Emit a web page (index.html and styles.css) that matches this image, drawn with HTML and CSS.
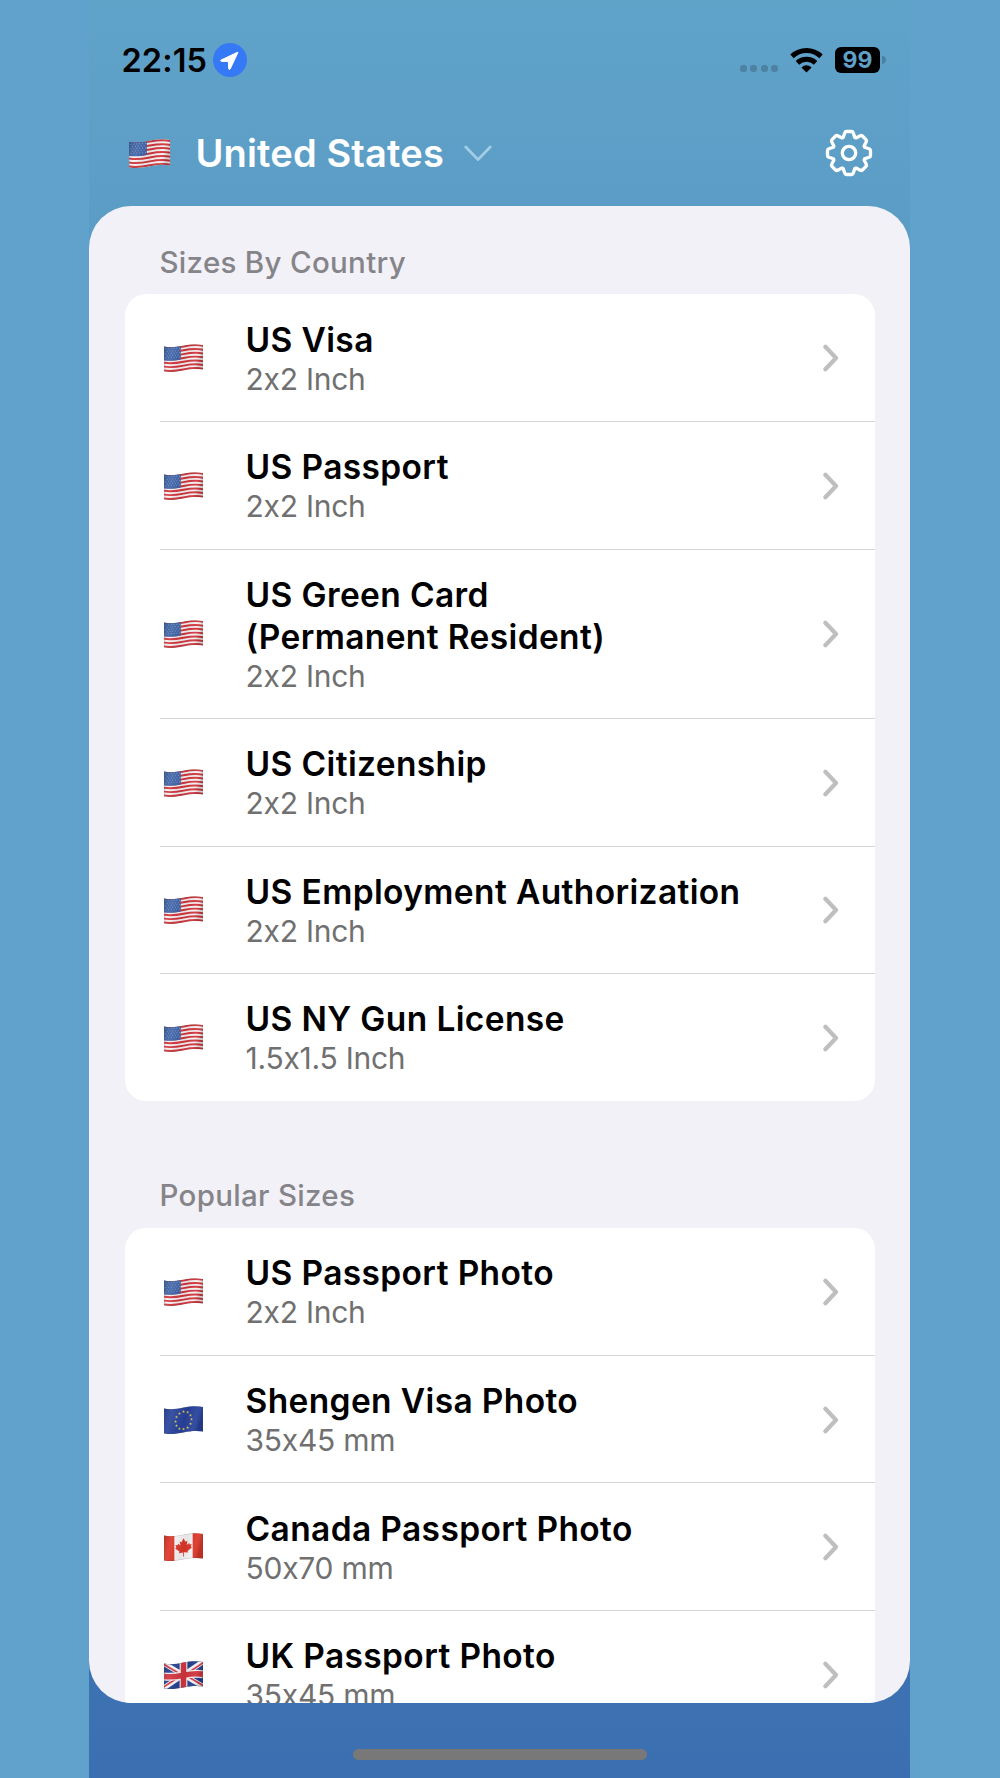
FILE: index.html
```html
<!DOCTYPE html>
<html lang="en">
  <head>
    <meta charset="utf-8" />
    <title>Photo Sizes</title>
    <link rel="stylesheet" href="styles.css">
  </head>
  <body>
    <!-- shared icons -->
    <svg class="sprite" width="0" height="0">
      <defs>
        <clipPath id="wave">
          <path d="M0 2.6C7 3.8 13 3 20 1.6S34 -0.3 40 1V25.6C34 24.4 27 25 20 26.4S7 28.4 0 27.4Z" />
        </clipPath>
        <linearGradient id="fold" x1="0" x2="1" y1="0" y2="0.2">
          <stop offset="0" stop-color="#000" stop-opacity="0.16" />
          <stop offset="0.25" stop-color="#fff" stop-opacity="0.08" />
          <stop offset="0.6" stop-color="#000" stop-opacity="0.06" />
          <stop offset="0.85" stop-color="#fff" stop-opacity="0.06" />
          <stop offset="1" stop-color="#000" stop-opacity="0.14" />
        </linearGradient>
        <path id="shade" d="M0 2.6C7 3.8 13 3 20 1.6S34 -0.3 40 1V25.6C34 24.4 27 25 20 26.4S7 28.4 0 27.4Z" fill="url(#fold)" stroke="#555" stroke-opacity="0.35" stroke-width="0.8" />
        <path id="stripe" d="M0 3.5C7 4.7 13 3.9 20 2.5S34 0.6 40 1.9" fill="none" stroke="#d2343c" stroke-width="1.95" />
        <path id="star" d="M0 -1.5L0.45 -0.45L1.5 -0.4L0.65 0.3L0.95 1.4L0 0.8L-0.95 1.4L-0.65 0.3L-1.5 -0.4L-0.45 -0.45Z" fill="#d9c35c" />
      </defs>

      <symbol id="flag-us" viewBox="0 0 40 28" preserveAspectRatio="none">
        <g clip-path="url(#wave)">
          <rect width="40" height="28" fill="#f6f1f1" />
          <use href="#stripe" />
          <use href="#stripe" y="3.82" />
          <use href="#stripe" y="7.64" />
          <use href="#stripe" y="11.46" />
          <use href="#stripe" y="15.28" />
          <use href="#stripe" y="19.1" />
          <use href="#stripe" y="22.92" />
          <path d="M0 0H17.2V15.4C12 16.6 6 17 0 16.4Z" fill="#3d62a6" />
          <g stroke="#c5d2ea" stroke-width="0.8" stroke-dasharray="0.9 1.9" opacity="0.6">
            <path d="M1.5 5.2L17 4.2" />
            <path d="M2.9 7.4L17 6.4" />
            <path d="M1.5 9.6L17 8.6" />
            <path d="M2.9 11.8L17 10.8" />
            <path d="M1.5 14L17 13" />
          </g>
          <use href="#shade" />
        </g>
      </symbol>

      <symbol id="flag-eu" viewBox="0 0 40 28" preserveAspectRatio="none">
        <g clip-path="url(#wave)">
          <rect width="40" height="28" fill="#27429b" />
          <use href="#star" x="20" y="5.5" />
          <use href="#star" x="24.2" y="6.2" />
          <use href="#star" x="27.2" y="9.2" />
          <use href="#star" x="28.2" y="13.2" />
          <use href="#star" x="27.2" y="17.8" />
          <use href="#star" x="24.2" y="21.5" />
          <use href="#star" x="20" y="23" />
          <use href="#star" x="15.8" y="22.6" />
          <use href="#star" x="12.8" y="19.6" />
          <use href="#star" x="11.8" y="15.4" />
          <use href="#star" x="12.8" y="11" />
          <use href="#star" x="15.8" y="7.4" />
          <use href="#shade" />
        </g>
      </symbol>

      <symbol id="flag-ca" viewBox="0 0 40 28" preserveAspectRatio="none">
        <g clip-path="url(#wave)">
          <rect width="40" height="28" fill="#f5f3f3" />
          <rect width="10.6" height="28" fill="#dc3628" />
          <rect x="29.4" width="10.6" height="28" fill="#dc3628" />
          <path d="M20 5.2L22 8.8L24 7.8L23.3 12L25.8 10L26.4 11.4L28.4 11L27.6 13.6L28.6 14.4L24.2 18L24.6 19.6L20.4 19.2V23.6H19.6V19.4L15.4 20.2L15.9 18.6L11.4 15.4L12.5 14.4L11.8 12L13.9 12.2L14.5 10.8L16.9 12.6L16.1 8.4L18 9.2Z" fill="#dc3628" />
          <use href="#shade" />
        </g>
      </symbol>

      <symbol id="flag-gb" viewBox="0 0 40 28" preserveAspectRatio="none">
        <g clip-path="url(#wave)">
          <rect width="40" height="28" fill="#223f8f" />
          <path d="M-1 2L41 26M-1 27.5L41 0" stroke="#f4f1f4" stroke-width="5" />
          <path d="M-1 3L20 15M20 13L41 25M-1 26.5L20 13M20 15L41 1" stroke="#d2343c" stroke-width="1.7" />
          <path d="M20 0V28M0 15.4C7 16.4 13 15.6 20 14.2S34 12.2 40 13.2" fill="none" stroke="#f4f1f4" stroke-width="8" />
          <path d="M20 0V28M0 15.4C7 16.4 13 15.6 20 14.2S34 12.2 40 13.2" fill="none" stroke="#d2343c" stroke-width="5.6" />
          <use href="#shade" />
        </g>
      </symbol>

      <symbol id="chevron" viewBox="0 0 16 28">
        <path d="M2.4 2.8L13 14L2.4 25.2" fill="none" stroke="#bfbfc0" stroke-width="4.2" stroke-linecap="round" stroke-linejoin="round" />
      </symbol>
    </svg>

    <div class="phone">
      <div class="status-bar">
        <span class="time">22:15</span>
        <svg class="location" viewBox="0 0 34 34">
          <circle cx="17" cy="17" r="17" fill="#3579f7" />
          <path d="M24.6 9.2L8 17.1Q7 17.9 8.2 18.3L15.4 18.6L15.7 25.8Q16.2 27.3 17.2 25.9L24.9 9.6Z" fill="#fff" stroke="#fff" stroke-width="1" stroke-linejoin="round" />
        </svg>
        <div class="dots"><i></i><i></i><i></i><i></i></div>
        <svg class="wifi" viewBox="0 0 33 25">
          <path d="M2 8.4A21 21 0 0 1 31 8.4M7.4 14.8A13.5 13.5 0 0 1 25.6 14.8" fill="none" stroke="#000" stroke-width="5" />
          <path d="M11.4 19.4Q16.5 15 21.6 19.4L16.5 24.6Z" />
        </svg>
        <div class="battery">99</div>
        <svg class="battery-tip" viewBox="0 0 4 10"><path d="M0 0.6Q4 2 4 5T0 9.4Z" fill="#4c7fa0" /></svg>
      </div>

      <div class="header">
        <svg class="header-flag"><use href="#flag-us" /></svg>
        <h1 class="country">United States</h1>
        <svg class="dropdown" viewBox="0 0 28 17">
          <path d="M1.8 2L14 14.6L26.2 2" fill="none" stroke="#a3cde5" stroke-width="2.8" stroke-linecap="round" stroke-linejoin="round" />
        </svg>
        <svg class="settings" viewBox="-24 -24 48 48">
          <path d="M-5.8 -15.6L-4.2 -20.2Q-3.8 -21.5 -2.6 -21.5H2.6Q3.8 -21.5 4.2 -20.2L5.8 -15.6L6.9 -15.1L11.3 -17.3Q12.5 -17.9 13.4 -17L17 -13.4Q17.9 -12.5 17.3 -11.3L15.1 -6.9L15.6 -5.8L20.2 -4.2Q21.5 -3.8 21.5 -2.6V2.6Q21.5 3.8 20.2 4.2L15.6 5.8L15.1 6.9L17.3 11.3Q17.9 12.5 17 13.4L13.4 17Q12.5 17.9 11.3 17.3L6.9 15.1L5.8 15.6L4.2 20.2Q3.8 21.5 2.6 21.5H-2.6Q-3.8 21.5 -4.2 20.2L-5.8 15.6L-6.9 15.1L-11.3 17.3Q-12.5 17.9 -13.4 17L-17 13.4Q-17.9 12.5 -17.3 11.3L-15.1 6.9L-15.6 5.8L-20.2 4.2Q-21.5 3.8 -21.5 2.6V-2.6Q-21.5 -3.8 -20.2 -4.2L-15.6 -5.8L-15.1 -6.9L-17.3 -11.3Q-17.9 -12.5 -17 -13.4L-13.4 -17Q-12.5 -17.9 -11.3 -17.3L-6.9 -15.1Z" />
          <circle r="6.7" />
        </svg>
      </div>

      <div class="sheet">
        <h2 class="section-title">Sizes By Country</h2>
        <ul class="card">
          <li class="row">
            <svg class="flag"><use href="#flag-us" /></svg>
            <div class="info">
              <div class="name">US Visa</div>
              <div class="size">2x2 Inch</div>
            </div>
            <svg class="chevron"><use href="#chevron" /></svg>
          </li>
          <li class="row">
            <svg class="flag"><use href="#flag-us" /></svg>
            <div class="info">
              <div class="name">US Passport</div>
              <div class="size">2x2 Inch</div>
            </div>
            <svg class="chevron"><use href="#chevron" /></svg>
          </li>
          <li class="row">
            <svg class="flag"><use href="#flag-us" /></svg>
            <div class="info">
              <div class="name">US Green Card<br />(Permanent Resident)</div>
              <div class="size">2x2 Inch</div>
            </div>
            <svg class="chevron"><use href="#chevron" /></svg>
          </li>
          <li class="row">
            <svg class="flag"><use href="#flag-us" /></svg>
            <div class="info">
              <div class="name">US Citizenship</div>
              <div class="size">2x2 Inch</div>
            </div>
            <svg class="chevron"><use href="#chevron" /></svg>
          </li>
          <li class="row">
            <svg class="flag"><use href="#flag-us" /></svg>
            <div class="info">
              <div class="name">US Employment Authorization</div>
              <div class="size">2x2 Inch</div>
            </div>
            <svg class="chevron"><use href="#chevron" /></svg>
          </li>
          <li class="row">
            <svg class="flag"><use href="#flag-us" /></svg>
            <div class="info">
              <div class="name">US NY Gun License</div>
              <div class="size">1.5x1.5 Inch</div>
            </div>
            <svg class="chevron"><use href="#chevron" /></svg>
          </li>
        </ul>

        <h2 class="section-title">Popular Sizes</h2>
        <ul class="card">
          <li class="row">
            <svg class="flag"><use href="#flag-us" /></svg>
            <div class="info">
              <div class="name">US Passport Photo</div>
              <div class="size">2x2 Inch</div>
            </div>
            <svg class="chevron"><use href="#chevron" /></svg>
          </li>
          <li class="row">
            <svg class="flag"><use href="#flag-eu" /></svg>
            <div class="info">
              <div class="name">Shengen Visa Photo</div>
              <div class="size">35x45 mm</div>
            </div>
            <svg class="chevron"><use href="#chevron" /></svg>
          </li>
          <li class="row">
            <svg class="flag"><use href="#flag-ca" /></svg>
            <div class="info">
              <div class="name">Canada Passport Photo</div>
              <div class="size">50x70 mm</div>
            </div>
            <svg class="chevron"><use href="#chevron" /></svg>
          </li>
          <li class="row">
            <svg class="flag"><use href="#flag-gb" /></svg>
            <div class="info">
              <div class="name">UK Passport Photo</div>
              <div class="size">35x45 mm</div>
            </div>
            <svg class="chevron"><use href="#chevron" /></svg>
          </li>
        </ul>
      </div>

      <div class="home-indicator"></div>
    </div>
  </body>
</html>
```
FILE: styles.css
```css
* {
  box-sizing: border-box;
}

body {
  margin: 0;
  background-color: #61a2cc;
  font-family: Inter, "Liberation Sans", sans-serif;
}

h1,
h2,
ul {
  margin: 0;
  padding: 0;
  list-style: none;
}

svg {
  display: block;
  flex-shrink: 0;
}

.sprite {
  position: absolute;
}

.phone {
  width: 821px;
  height: 1778px;
  margin-left: 89px;
  display: flex;
  flex-direction: column;
  background: linear-gradient(#60a3c9, #3b6fb1);
}

.status-bar {
  height: 120px;
  padding: 0 24px 0 32.5px;
  display: flex;
  align-items: center;
}

.time {
  width: 91.5px;
  font-size: 32.5px;
  font-weight: 600;
  letter-spacing: 0.1px;
}

.location {
  width: 34px;
  height: 34px;
}

.dots {
  display: flex;
  gap: 3.3px;
  margin-left: auto;
  padding-top: 16px;
}

.dots i {
  width: 7px;
  height: 7px;
  border-radius: 3px;
  background-color: #4d82a3;
}

.wifi {
  width: 33px;
  height: 25px;
  margin-left: 12px;
}

.battery {
  width: 45px;
  height: 26px;
  margin-left: 12px;
  border-radius: 6px;
  background-color: #000;
  color: #5fa0c8;
  font-size: 23px;
  font-weight: 700;
  line-height: 26px;
  text-align: center;
}

.battery-tip {
  width: 4px;
  height: 10px;
  margin-left: 2px;
}

.header {
  height: 86px;
  padding: 0 37.5px 20px 40px;
  display: flex;
  align-items: center;
}

.header-flag {
  width: 41.5px;
  height: 29px;
}

.country {
  margin-left: 25px;
  font-size: 38px;
  font-weight: 600;
  line-height: 46px;
  letter-spacing: 0.15px;
  color: #fff;
}

.dropdown {
  width: 28px;
  height: 17px;
  margin-left: 20.5px;
}

.settings {
  width: 48px;
  height: 48px;
  margin-left: auto;
  fill: none;
  stroke: #fff;
  stroke-width: 3.3;
  stroke-linejoin: round;
}

.sheet {
  height: 1497px;
  padding: 0 35px 0 36px;
  overflow: hidden;
  border-radius: 42px;
  background-color: #f2f1f7;
}

.section-title {
  height: 88px;
  padding: 37px 0 0 34.5px;
  font-size: 29.5px;
  font-weight: 500;
  line-height: 38px;
  letter-spacing: 0.3px;
  color: #858489;
}

.card {
  overflow: hidden;
  border-radius: 21px;
  background-color: #fff;
}

.card + .section-title {
  height: 127px;
  padding-top: 75.5px;
}

.row {
  margin-left: 34.5px;
  padding: 24.6px 36.5px 23.4px 4px;
  display: flex;
  align-items: center;
}

.row + .row {
  padding-top: 24.2px;
  border-top: 1px solid #d6d6d8;
}

.flag {
  width: 39px;
  height: 28px;
}

.info {
  flex: 1;
  margin-left: 43px;
}

.name {
  font-size: 33.5px;
  font-weight: 600;
  line-height: 42px;
  letter-spacing: 0.37px;
  color: #000;
}

/* calt would turn the x between digits into a multiplication sign */
.size {
  font-size: 30px;
  font-feature-settings: "calt" 0;
  line-height: 37px;
  letter-spacing: -0.25px;
  color: #707070;
}

.chevron {
  width: 16px;
  height: 28px;
}

.home-indicator {
  width: 294px;
  height: 11px;
  margin: 46px auto 0;
  border-radius: 6px;
  background-color: #787878;
}
```
